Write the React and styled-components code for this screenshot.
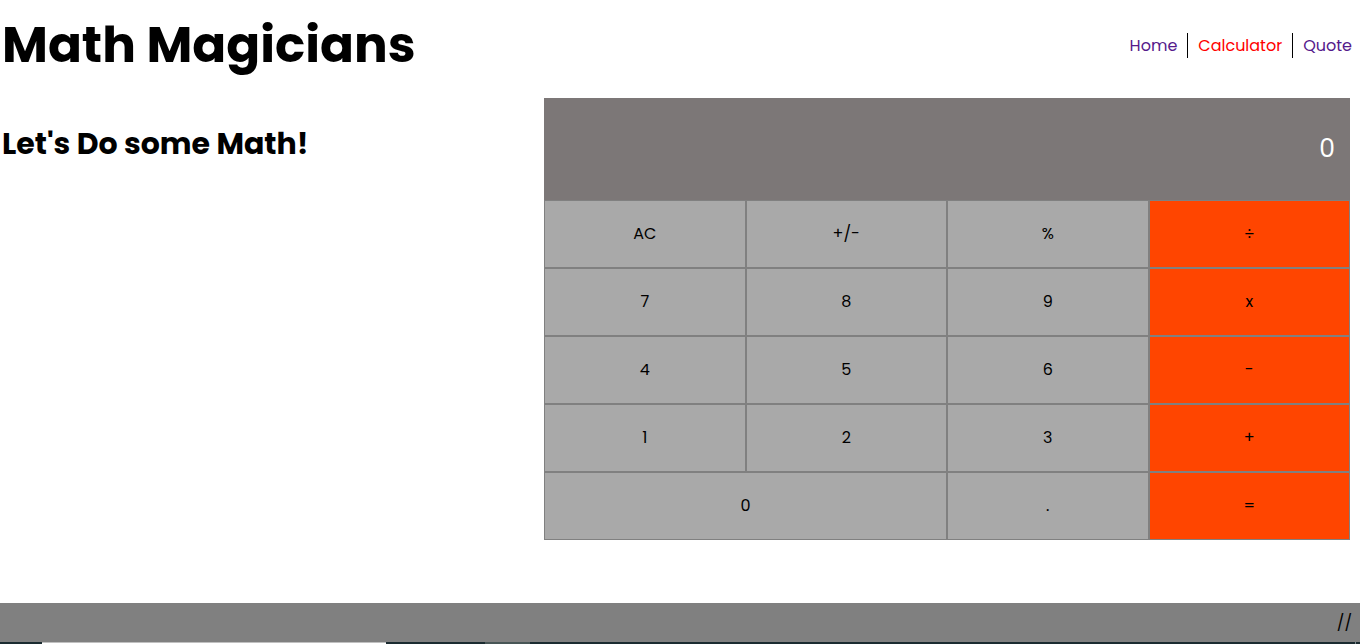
import React, { useState } from 'react';
import styled, { createGlobalStyle } from 'styled-components';

const GlobalStyle = createGlobalStyle`
  * { box-sizing: border-box; }
  body {
    margin: 0;
    background: #fff;
    color: #000;
    font-family: Poppins, Inter, "Open Sans", sans-serif;
    font-size: 16px;
    font-weight: 400;
  }
`;

const Page = styled.div`
  min-height: 100vh;
  display: flex;
  flex-direction: column;
`;

const Header = styled.header`
  display: flex;
  align-items: center;
  justify-content: space-between;
  padding: 8px 8px 8px 2px;
`;

const Title = styled.h1`
  margin: 0;
  font-size: 50px;
  line-height: 74px;
  font-weight: 700;
`;

const Nav = styled.nav`
  display: flex;
`;

const NavLink = styled.a`
  padding: 0 10px;
  line-height: 25px;
  text-decoration: none;
  color: ${({ $active }) => ($active ? '#ff0000' : '#551a8b')};
  & + & { border-left: 1px solid #000; }
  &:last-child { padding-right: 0; }
`;

const Main = styled.main`
  flex: 1;
  display: grid;
  grid-template-columns: 2fr 3fr;
  align-items: start;
  padding: 8px 0 60px;
`;

const Subtitle = styled.h2`
  margin: 24px 0 0 2px;
  font-size: 30px;
  line-height: 44px;
  font-weight: 700;
`;

const Calculator = styled.section`
  margin-right: 10px;
  display: grid;
  grid-template-columns: repeat(4, 1fr);
  grid-template-rows: 102px;
  grid-auto-rows: 68px;
`;

const Display = styled.output`
  grid-column: 1 / -1;
  display: flex;
  align-items: center;
  justify-content: flex-end;
  padding: 0 15px;
  background: #7c7777;
  color: #fff;
  font-size: 25px;
`;

const Key = styled.button`
  grid-column: span ${({ $wide }) => ($wide ? 2 : 1)};
  margin: 0;
  padding: 0 0 2px;
  border: 1px solid #808080;
  border-radius: 0;
  background: ${({ $operator }) => ($operator ? '#ff4500' : '#a9a9a9')};
  color: #000;
  font: inherit;
  cursor: pointer;
`;

const Footer = styled.footer`
  padding: 0 8px;
  background: #808080;
  text-align: right;
  font-size: 16px;
  line-height: 39px;
`;

const Taskbar = styled.div`
  display: flex;
  height: 2px;
  padding: 0 4px 0 42px;
  background: #1b2b30;
`;

const SearchEdge = styled.div`
  width: 344px;
  background: #fff;
  border-top: 1px solid #c0c0c0;
`;

const TaskEdge = styled.div`
  width: 45px;
  margin-left: 99px;
  background: #485656;
`;

const DesktopEdge = styled.div`
  width: 1px;
  margin-left: auto;
  background: #78868a;
`;

const keys = [
  'AC', '+/-', '%', '÷',
  '7', '8', '9', 'x',
  '4', '5', '6', '-',
  '1', '2', '3', '+',
  '0', '.', '=',
];
const operators = ['÷', 'x', '-', '+', '='];

const compute = (a, b, op) => {
  if (op === '+') return a + b;
  if (op === '-') return a - b;
  if (op === 'x') return a * b;
  return a / b;
};

const initial = { value: '0', total: null, operation: null, fresh: true };

const press = (state, key) => {
  const { value, total, operation, fresh } = state;
  if (key === 'AC') return initial;
  if (key === '+/-') return { ...state, value: String(-Number(value)) };
  if (key === '%') return { ...state, value: String(Number(value) / 100) };
  if (operators.includes(key)) {
    const result = operation && !fresh ? compute(total, Number(value), operation) : Number(value);
    return { value: String(result), total: result, operation: key === '=' ? null : key, fresh: true };
  }
  if (key === '.') {
    if (fresh) return { ...state, value: '0.', fresh: false };
    return value.includes('.') ? state : { ...state, value: `${value}.` };
  }
  return { ...state, value: fresh || value === '0' ? key : value + key, fresh: false };
};

export default function App() {
  const [state, setState] = useState(initial);

  return (
    <>
      <GlobalStyle />
      <Page>
        <Header>
          <Title>Math Magicians</Title>
          <Nav>
            <NavLink href="#home">Home</NavLink>
            <NavLink href="#calculator" $active>Calculator</NavLink>
            <NavLink href="#quote">Quote</NavLink>
          </Nav>
        </Header>
        <Main>
          <Subtitle>Let's Do some Math!</Subtitle>
          <Calculator>
            <Display>{state.value}</Display>
            {keys.map((key) => (
              <Key
                key={key}
                type="button"
                $wide={key === '0'}
                $operator={operators.includes(key)}
                onClick={() => setState((s) => press(s, key))}
              >
                {key}
              </Key>
            ))}
          </Calculator>
        </Main>
        <Footer>//</Footer>
        <Taskbar>
          <SearchEdge />
          <TaskEdge />
          <DesktopEdge />
        </Taskbar>
      </Page>
    </>
  );
}
